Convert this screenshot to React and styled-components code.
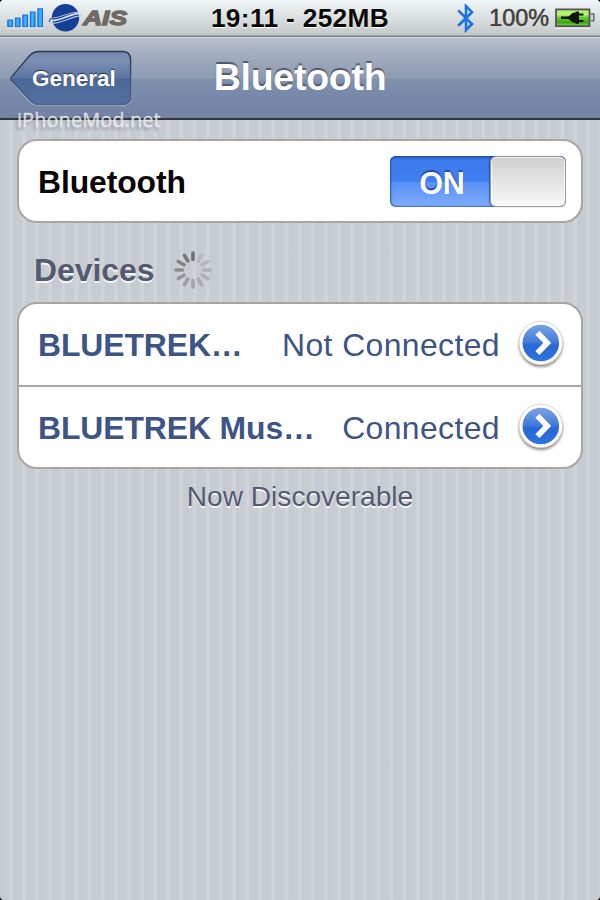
import React from "react";
import styled, { createGlobalStyle } from "styled-components";

const GlobalStyle = createGlobalStyle`
  html, body { margin: 0; padding: 0; background: #000; }
  * { box-sizing: border-box; }
`;

const Screen = styled.main`
  position: relative;
  display: flex;
  flex-direction: column;
  width: 600px;
  height: 900px;
  overflow: hidden;
  border-radius: 4px;
  font-family: "Liberation Sans", Arial, sans-serif;
  background: repeating-linear-gradient(
    90deg,
    #c6cbd3 0,
    #c8cdd2 8.6px,
    #ced4d8 9.6px,
    #ced4d8 12.3px,
    #c6cbd3 13.125px
  );
`;

const StatusBar = styled.header`
  display: flex;
  align-items: flex-start;
  height: 38px;
  flex: none;
  background: linear-gradient(#f1f6f9 0, #dfe4e5 14px, #c3c8c9 35px, #7d8083 36px, #7d8083 37px, #dadde2 37px);
`;

const StatusSide = styled.div`
  display: flex;
  align-items: center;
  flex: 1 1 0;
  height: 36px;
  justify-content: ${(p) => (p.$end ? "flex-end" : "flex-start")};
  padding: ${(p) => (p.$end ? "0 5px 0 0" : "0 0 0 7px")};
`;

const Clock = styled.time`
  font-size: 26.25px;
  line-height: 36px;
  height: 36px;
  margin: 0 1px 0 -1px;
  font-weight: bold;
  letter-spacing: 0.35px;
  white-space: pre;
  color: #0b0908;
  text-shadow: 0 1px 1px #fff;
`;

const Percent = styled.span`
  font-size: 23.4px;
  line-height: 36px;
  margin: 0 6px 0 14px;
  color: #453f3b;
  -webkit-text-stroke: 0.6px #453f3b;
  text-shadow: 0 1px 1px #fff;
`;

const Icon = styled.svg`
  display: block;
  flex: none;
  overflow: visible;
`;

const Carrier = styled(Icon)`
  margin-left: 4px;
`;

const NavBar = styled.nav`
  display: grid;
  grid-template-columns: 122px 1fr 122px;
  align-items: center;
  flex: none;
  height: 82px;
  padding: 0 10px;
  border-bottom: 2px solid #35363a;
  background: linear-gradient(#b7bece 0, #9ba6bb 25px, #8c99ae 41px, #8192ae 41px, #7687a8 60px, #7282a2 80px);
`;

const BackButton = styled.button`
  position: relative;
  width: 122px;
  height: 55px;
  padding: 1px 0 0 22px;
  border: 0;
  background: none;
  font: bold 22.5px/54px "Liberation Sans", Arial, sans-serif;
  color: #fff;
  text-align: left;
  text-shadow: 0 -1px 1px #28344f;
`;

const BackShape = styled.svg`
  position: absolute;
  inset: 0;
  overflow: visible;
`;

const BackLabel = styled.span`
  position: relative;
`;

const Title = styled.h1`
  margin: -2px 0 0;
  font-size: 37.5px;
  line-height: 44px;
  letter-spacing: -0.25px;
  text-align: center;
  color: #fff;
  text-shadow: 0 -2px 1px #52586a;
`;

const Watermark = styled.div`
  position: absolute;
  left: 17px;
  top: 106px;
  font: 20px/28px "Open Sans", "Noto Sans", sans-serif;
  letter-spacing: 0.05px;
  color: rgba(238, 242, 245, 0.78);
  -webkit-text-stroke: 0.4px rgba(238, 242, 245, 0.7);
  text-shadow: -2px 3px 3px rgba(40, 48, 60, 0.35);
`;

const Content = styled.section`
  display: flex;
  flex-direction: column;
  padding: 19px 17px 0;
`;

const Card = styled.div`
  border: 2px solid #aaa5a4;
  border-radius: 20px;
  background: #fff;
  overflow: hidden;
`;

const Row = styled.div`
  display: flex;
  align-items: center;
  height: ${(p) => p.$height}px;
  padding: 0 ${(p) => p.$right}px 0 19px;
  font-size: 31.9px;
  line-height: 40px;
  color: ${(p) => p.$color};

  & + & {
    border-top: 2px solid #aaa5a4;
  }
`;

const RowLabel = styled.strong`
  flex: 1;
  margin-top: 2px;
  white-space: nowrap;
  letter-spacing: -0.1px;
`;

const Status = styled.span`
  letter-spacing: 0.4px;
  margin: 2px 17px 0 0;
`;

const Toggle = styled.div`
  display: flex;
  width: 176px;
  height: 51px;
  border-radius: 6px;
  background: linear-gradient(#2c63cd 0, #3d7cec 5px, #4180f1 26px, #5790f5 26px, #7cabfd 49px, #4c7cd0 51px);
  box-shadow: inset 1px 0 2px #2356b5, inset 0 1px 1px #1d4696;
`;

const ToggleText = styled.span`
  width: 100px;
  padding-left: 4px;
  text-align: center;
  font-weight: bold;
  font-size: 30.5px;
  line-height: 54px;
  color: #fff;
  text-shadow: 0 -2px 1px #234c9e;
`;

const Knob = styled.span`
  width: 76px;
  height: 51px;
  border: 1.5px solid #9b9797;
  border-radius: 6px;
  background: linear-gradient(#d0cfcf, #f9f9f9);
  box-shadow: inset 0 0 0 1px rgba(255, 255, 255, 0.65), -1px 0 1px rgba(15, 50, 120, 0.6);
`;

const SectionHeader = styled.div`
  display: flex;
  align-items: center;
  gap: 19px;
  height: 79px;
  padding: 15px 0 0 17px;
`;

const SectionTitle = styled.h2`
  margin: 0;
  font-size: 31.9px;
  line-height: 40px;
  color: #555a70;
  text-shadow: 0 2px 0 #f4f6f8;
`;

const Footer = styled.p`
  margin: 11px 0 0;
  font-size: 28.1px;
  line-height: 34px;
  text-align: center;
  color: #555a70;
  text-shadow: 0 1.5px 0 #f4f6f8;
`;

const SignalIcon = () => (
  <Icon width="37" height="36" viewBox="0 0 37 36">
    <defs>
      <linearGradient id="signal" x1="0" y1="0" x2="1" y2="0">
        <stop offset="0" stopColor="#1583f5" />
        <stop offset=".5" stopColor="#45baff" />
        <stop offset="1" stopColor="#1583f5" />
      </linearGradient>
    </defs>
    {[6.8, 8.8, 11.8, 14.8, 18].map((h, i) => (
      <rect key={h} x={0.8 + i * 7.5} y={26.8 - h} width="4.8" height={h} fill="url(#signal)" stroke="#1266d7" strokeWidth=".9" />
    ))}
    <path d="M0 28h36" stroke="#fff" strokeWidth="1" opacity=".7" />
  </Icon>
);

const CarrierLogo = () => (
  <Carrier width="84" height="36" viewBox="0 0 84 36">
    <circle cx="17.5" cy="17.7" r="13.7" fill="#143f96" />
    <g fill="none" strokeLinecap="round">
      <path d="M2 20.5C13 21.5 20 14 32.5 13.4" stroke="#dbe3f0" strokeWidth="1.8" />
      <path d="M3 18.3C13 18 20 12.3 30 12" stroke="#a9bddd" strokeWidth="1" />
      <path d="M2.5 23.2C14 24 21 16.7 33.5 15.6" stroke="#b8c8e2" strokeWidth="1.1" />
      <path d="M1.3 21.6c.4-2.5 1.6-3.6 4-4" stroke="#456aa9" strokeWidth="1.4" />
    </g>
    <text
      x="35"
      y="25"
      textLength="44"
      lengthAdjust="spacingAndGlyphs"
      fontFamily="Liberation Sans, Arial, sans-serif"
      fontWeight="bold"
      fontStyle="italic"
      fontSize="20.5"
      fill="#6f6863"
      stroke="#6f6863"
      strokeWidth="1.3"
    >
      AIS
    </text>
  </Carrier>
);

const BluetoothIcon = () => (
  <Icon width="18" height="36" viewBox="0 0 18 36">
    <path d="M1.2 10.3 15 24 9 30V6.2l6 6L1.2 25.8" fill="none" stroke="#1773e6" strokeWidth="2.6" />
  </Icon>
);

const BatteryIcon = () => (
  <Icon width="40" height="36" viewBox="0 0 40 36">
    <defs>
      <linearGradient id="battery" x1="0" y1="0" x2="0" y2="1">
        <stop offset="0" stopColor="#a7ec65" />
        <stop offset=".3" stopColor="#b9f577" />
        <stop offset=".48" stopColor="#6acb2b" />
        <stop offset=".78" stopColor="#3ba60c" />
        <stop offset="1" stopColor="#8ae33c" />
      </linearGradient>
    </defs>
    <path d="M1 28h34" stroke="#fff" />
    <rect x="1" y="9.4" width="33.5" height="16.8" fill="url(#battery)" stroke="#535360" strokeWidth="1.8" />
    <path d="M36 14h2.8v6.8H36" fill="#d5d8da" stroke="#666670" strokeWidth="1.5" />
    <path d="M6 16.5h7c2 0 3.2-3.9 6.5-3.9h1.2v-1.1H24v2h4.5v2H24v4.6h4.5v2H24v1.6h-3.3v-1h-1.2c-3.3 0-4.5-3.7-6.5-3.7H6z" fill="#10120d" />
  </Icon>
);

const Spinner = () => (
  <Icon width="38" height="38" viewBox="-19 -19 38 38">
    {[0, 30, 60, 90, 120, 150, 180, 210, 240, 270, 300, 330].map((angle, i) => (
      <path
        key={angle}
        d="M0-17V-10.5"
        transform={`rotate(${angle})`}
        stroke={["#74706f", "#b7b9bc", "#b4b6b8", "#b1b2b5", "#aeafb1", "#a9aaab", "#a5a4a6", "#9f9e9f", "#989798", "#8f8c8c", "#858281", "#7c7877"][i]}
        strokeWidth="3.6"
        strokeLinecap="round"
      />
    ))}
  </Icon>
);

const Disclosure = () => (
  <Icon width="48" height="50" viewBox="0 0 48 50">
    <defs>
      <linearGradient id="disc" x1="0" y1="0" x2="0" y2="1">
        <stop offset="0" stopColor="#7ba3e4" />
        <stop offset=".48" stopColor="#427bd9" />
        <stop offset=".56" stopColor="#2668d5" />
        <stop offset="1" stopColor="#2d73e1" />
      </linearGradient>
      <filter id="discShadow" x="-30%" y="-30%" width="160%" height="170%">
        <feGaussianBlur stdDeviation="1.6" />
      </filter>
    </defs>
    <circle cx="23.8" cy="26" r="21.8" fill="#5a5552" opacity=".75" filter="url(#discShadow)" />
    <circle cx="23.8" cy="24" r="21.8" fill="#fff" stroke="#c4c1c0" strokeWidth=".6" />
    <circle cx="23.8" cy="24" r="18.3" fill="url(#disc)" />
    <path d="m20.4 13.7 9.8 10.2-9.8 10.2" fill="none" stroke="#fff" strokeWidth="5.7" />
  </Icon>
);

const BackOutline = () => (
  <BackShape width="122" height="55" viewBox="0 0 122 55">
    <defs>
      <linearGradient id="back" x1="0" y1="0" x2="0" y2="1">
        <stop offset="0" stopColor="#7185ac" />
        <stop offset=".15" stopColor="#7f92b5" />
        <stop offset=".5" stopColor="#5974a3" />
        <stop offset=".52" stopColor="#4b6898" />
        <stop offset="1" stopColor="#526f9f" />
      </linearGradient>
      <linearGradient id="backEdge" x1="0" y1="0" x2="0" y2="1">
        <stop offset="0" stopColor="#2f394c" />
        <stop offset="1" stopColor="#4c628b" />
      </linearGradient>
    </defs>
    <path d="M29 2H113Q121 2 121 10V46Q121 54.6 113 54.6H29Q23 54.6 19 50.5L1 30L19 6Q23 2 29 2Z" fill="none" stroke="#a8b5cc" strokeWidth="1" />
    <path d="M29 .6H112.5Q120.6.6 120.6 8.8V45.2Q120.6 53.4 112.5 53.4H29Q24 53.4 20.5 49.5L1.5 29.3Q.2 27.8 1.5 26L19.5 4.8Q23.3.6 29 .6Z" fill="url(#back)" stroke="url(#backEdge)" strokeWidth="1.5" />
  </BackShape>
);

const devices = [
  { name: "BLUETREK…", status: "Not Connected", height: 80.5 },
  { name: "BLUETREK Mus…", status: "Connected", height: 82.5 },
];

export default function App() {
  return (
    <>
      <GlobalStyle />
      <Screen>
        <StatusBar>
          <StatusSide>
            <SignalIcon />
            <CarrierLogo />
          </StatusSide>
          <Clock>19:11 - 252MB</Clock>
          <StatusSide $end>
            <BluetoothIcon />
            <Percent>100%</Percent>
            <BatteryIcon />
          </StatusSide>
        </StatusBar>
        <NavBar>
          <BackButton>
            <BackOutline />
            <BackLabel>General</BackLabel>
          </BackButton>
          <Title>Bluetooth</Title>
        </NavBar>
        <Watermark>iPhoneMod.net</Watermark>
        <Content>
          <Card>
            <Row $height={80} $right={15} $color="#080605">
              <RowLabel>Bluetooth</RowLabel>
              <Toggle>
                <ToggleText>ON</ToggleText>
                <Knob />
              </Toggle>
            </Row>
          </Card>
          <SectionHeader>
            <SectionTitle>Devices</SectionTitle>
            <Spinner />
          </SectionHeader>
          <Card>
            {devices.map((d) => (
              <Row key={d.name} $height={d.height} $right={16} $color="#3d5485">
                <RowLabel>{d.name}</RowLabel>
                <Status>{d.status}</Status>
                <Disclosure />
              </Row>
            ))}
          </Card>
          <Footer>Now Discoverable</Footer>
        </Content>
      </Screen>
    </>
  );
}
